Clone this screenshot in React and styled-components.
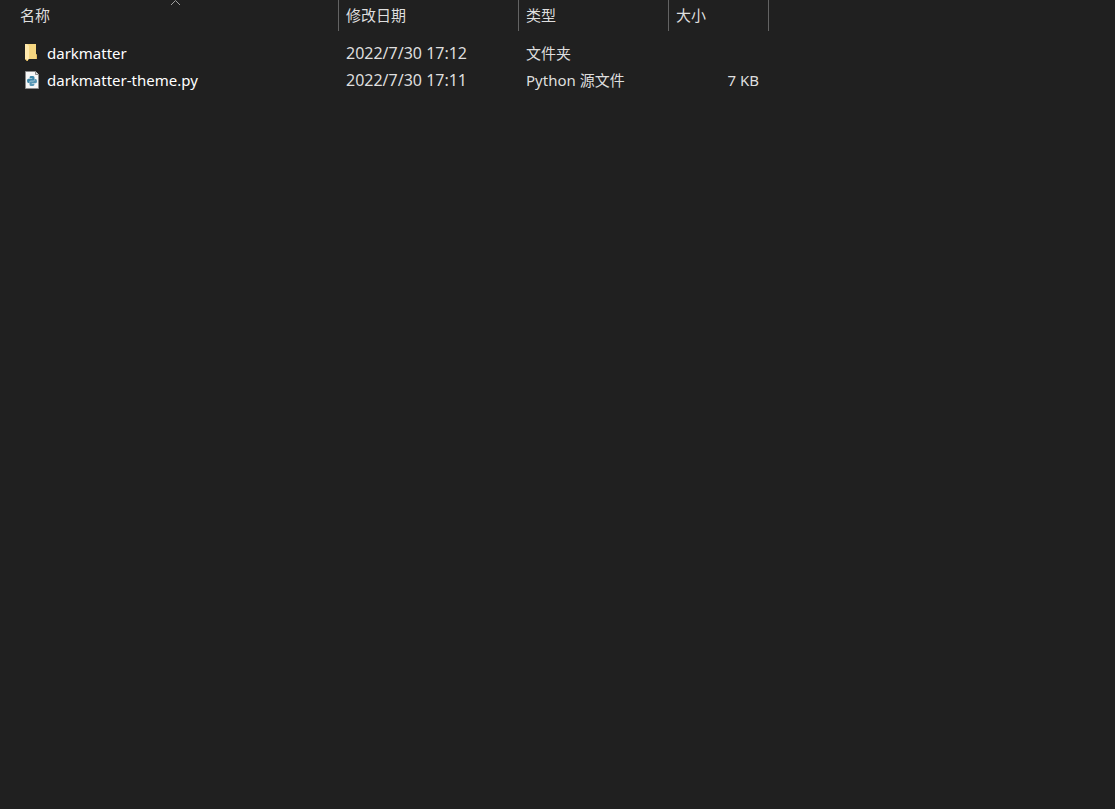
import React, { useState } from 'react';
import styled, { createGlobalStyle } from 'styled-components';

const GlobalStyle = createGlobalStyle`
  body {
    margin: 0;
    background: #202020;
    color: #dedede;
    font-family: 'Noto Sans', 'Noto Sans CJK SC', sans-serif;
    font-size: 15px;
    line-height: 20px;
  }
`

const FileTable = styled.table`
  table-layout: fixed;
  width: 769px;
  border-spacing: 0;
  tbody::before {
    content: '';
    display: block;
    height: 9px;
  }
`

const HeaderCell = styled.th`
  position: relative;
  box-sizing: border-box;
  width: ${({ $width }) => $width}px;
  height: 31px;
  padding: 0;
  border-right: 1px solid #636363;
  font-weight: normal;
`

const SortButton = styled.button`
  display: block;
  width: 100%;
  height: 31px;
  padding: 0 0 2px ${({ $first }) => ($first ? 20 : 7)}px;
  border: none;
  background: none;
  color: inherit;
  font: inherit;
  text-align: left;
  cursor: pointer;
`

const SortArrow = styled.svg`
  position: absolute;
  top: 0;
  left: calc(50% + 1px);
  width: 11px;
  height: 6px;
  ${({ $desc }) => $desc && 'transform: rotate(180deg);'}
`

const Cell = styled.td`
  box-sizing: border-box;
  height: 27px;
  padding: 0 ${({ $right }) => ($right ? 10 : 0)}px 2px 7px;
  font-size: ${({ $date }) => ($date ? 16 : 15)}px;
  text-align: ${({ $right }) => ($right ? 'right' : 'left')};
  white-space: nowrap;
`

const FileName = styled.div`
  display: flex;
  align-items: center;
  gap: 7px;
  padding-left: 17px;
  color: #fff;
  svg {
    width: 16px;
    height: 18px;
    flex: none;
  }
`

const FolderIcon = () => (
  <svg viewBox='0 0 16 18' aria-hidden='true'>
    <path d='M3 0h9v10l1 1v4H3z' fill='#f5d680' />
    <path d='M12 10l1 1v4h-1z' fill='#e6bd62' />
    <path d='M1 0h2l2 2v13l-1 1v1H3L1 15z' fill='#ffe9ad' />
    <path d='M1 15l2 2h1v-1H3l-1-1z' fill='#e8bc58' />
  </svg>
)

const PythonIcon = () => (
  <svg viewBox='0 0 16 18' aria-hidden='true'>
    <path d='M1.5 .5h10l3 3v14h-13z' fill='#f7f7f7' stroke='#8b8b8b' />
    <path d='M11.5 .5v3h3' fill='#ddd' stroke='#8b8b8b' />
    <path d='M7 5h2q1.500 0 1.500 1.500v2q0 1.200-1.200 1.200H6.800Q5.500 9.700 5.500 11v1H4.500Q3 12 3 9.800T4.500 7.700h3.800v-.5H5.600v-.8Q5.600 5 7 5z' fill='#3d86a8' />
    <path d='M9 15H7q-1.500 0-1.500-1.500v-2q0-1.200 1.200-1.200h2.500q1.300 0 1.300-1.300V8h1Q13 8 13 10.200t-1.500 2.100H7.700v.5h2.700v.8Q10.400 15 9 15z' fill='#5796b4' />
  </svg>
)

const columns = [
  { key: 'name', label: '名称', width: 339 },
  { key: 'date', label: '修改日期', width: 180 },
  { key: 'type', label: '类型', width: 150 },
  { key: 'size', label: '大小', width: 100 },
]

const files = [
  { name: 'darkmatter', date: '2022/7/30 17:12', type: '文件夹', size: '', folder: true },
  { name: 'darkmatter-theme.py', date: '2022/7/30 17:11', type: 'Python 源文件', size: '7 KB' },
]

const App = () => {

  const [sort, setSort] = useState({ key: 'name', desc: false });

  const handleSort = (key) => {
    setSort({ key, desc: sort.key === key && !sort.desc });
  }

  const sorted = [...files].sort((a, b) => {
    const order = a[sort.key].localeCompare(b[sort.key]);
    return sort.desc ? -order : order;
  })

  return (
    <main>
      <GlobalStyle />
      <FileTable>
        <thead>
          <tr>
            {columns.map(({ key, label, width }) => (
              <HeaderCell key={key} $width={width}>
                <SortButton $first={key === 'name'} onClick={() => handleSort(key)}>{label}</SortButton>
                {sort.key === key && (
                  <SortArrow $desc={sort.desc} viewBox='0 0 11 6' aria-hidden='true'>
                    <path d='M1 5l4.500-4.500L10 5' fill='none' stroke='#a0a0a0' />
                  </SortArrow>
                )}
              </HeaderCell>
            ))}
          </tr>
        </thead>
        <tbody>
          {sorted.map((file) => (
            <tr key={file.name}>
              <Cell>
                <FileName>
                  {file.folder ? <FolderIcon /> : <PythonIcon />}
                  <span>{file.name}</span>
                </FileName>
              </Cell>
              <Cell $date>{file.date}</Cell>
              <Cell>{file.type}</Cell>
              <Cell $right>{file.size}</Cell>
            </tr>
          ))}
        </tbody>
      </FileTable>
    </main>
  );
};

export default App;
